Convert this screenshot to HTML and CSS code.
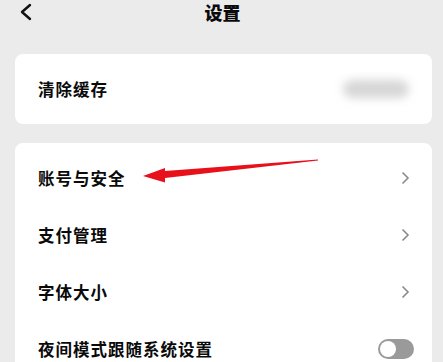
FILE: index.html
```html
<!DOCTYPE html>
<html lang="zh">
<head>
<meta charset="utf-8">
<link rel="stylesheet" href="styles.css">
</head>
<body>
<div class="page">
  <header class="nav">
    <svg class="back" width="14" height="18" viewBox="0 0 14 18"><path d="M11 2 L3 9 L11 16" fill="none" stroke="#111" stroke-width="2.4" stroke-linecap="round" stroke-linejoin="round"/></svg>
    <div class="title">设置</div>
  </header>

  <section class="card card-cache">
    <div class="row">
      <span class="label">清除缓存</span>
      <span class="blur-pill"></span>
    </div>
  </section>

  <section class="card card-list">
    <div class="row">
      <span class="label">账号与安全</span>
      <svg class="chev" width="9" height="14" viewBox="0 0 9 14"><path d="M1.5 1.5 L7 7 L1.5 12.5" fill="none" stroke="#8a8a8a" stroke-width="1.6"/></svg>
    </div>
    <div class="row">
      <span class="label">支付管理</span>
      <svg class="chev" width="9" height="14" viewBox="0 0 9 14"><path d="M1.5 1.5 L7 7 L1.5 12.5" fill="none" stroke="#8a8a8a" stroke-width="1.6"/></svg>
    </div>
    <div class="row">
      <span class="label">字体大小</span>
      <svg class="chev" width="9" height="14" viewBox="0 0 9 14"><path d="M1.5 1.5 L7 7 L1.5 12.5" fill="none" stroke="#8a8a8a" stroke-width="1.6"/></svg>
    </div>
    <div class="row">
      <span class="label">夜间模式跟随系统设置</span>
      <span class="toggle"><span class="knob"></span></span>
    </div>
  </section>

  <svg class="annot" width="443" height="362" viewBox="0 0 443 362">
    <polygon points="318,159.5 165,171 165,168 143,176 165,182.5 165,178 318,160.5" fill="#e8101a"/>
  </svg>
</div>
</body>
</html>
```

FILE: styles.css
```css
* { box-sizing: border-box; }
html, body { margin: 0; padding: 0; }
body {
  background: #ebebeb;
  font-family: "Noto Sans CJK SC", "Noto Sans", sans-serif;
  color: #0a0a0a;
  width: 443px;
  height: 362px;
  overflow: hidden;
}
.page { position: relative; width: 443px; height: 362px; overflow: hidden; }
.nav {
  position: relative;
  height: 25px;
  display: flex;
  align-items: center;
  justify-content: center;
}
.back { position: absolute; left: 19px; top: 3px; }
.title {
  font-size: 18px;
  font-weight: 900;
  line-height: 25px;
  margin-left: 2px;
  margin-top: -1px;
}
.card {
  background: #fff;
  border-radius: 8px;
  margin-left: 15px;
  width: 417px;
}
.card-cache { margin-top: 29px; height: 70px; display: flex; align-items: center; }
.card-cache .row { width: 100%; }
.card-list { margin-top: 19px; padding-top: 6px; padding-bottom: 20px; }
.row {
  height: 57px;
  display: flex;
  align-items: center;
  justify-content: space-between;
  padding-left: 23px;
  padding-right: 21px;
}
.label {
  font-size: 16.5px;
  font-weight: 700;
  letter-spacing: 1px;
  line-height: 20px;
}
.chev { margin-right: 1px; }
.blur-pill {
  width: 66px;
  height: 18px;
  border-radius: 9px;
  background: #d6d6d6;
  filter: blur(5px);
  margin-right: 2px;
}
.toggle {
  position: relative;
  width: 36px;
  height: 20px;
  border-radius: 10px;
  background: #9a9a9a;
  margin-right: -3px;
}
.knob {
  position: absolute;
  left: 2px;
  top: 2px;
  width: 16px;
  height: 16px;
  border-radius: 50%;
  background: #fff;
}
.annot { position: absolute; left: 0; top: 0; pointer-events: none; }
```
